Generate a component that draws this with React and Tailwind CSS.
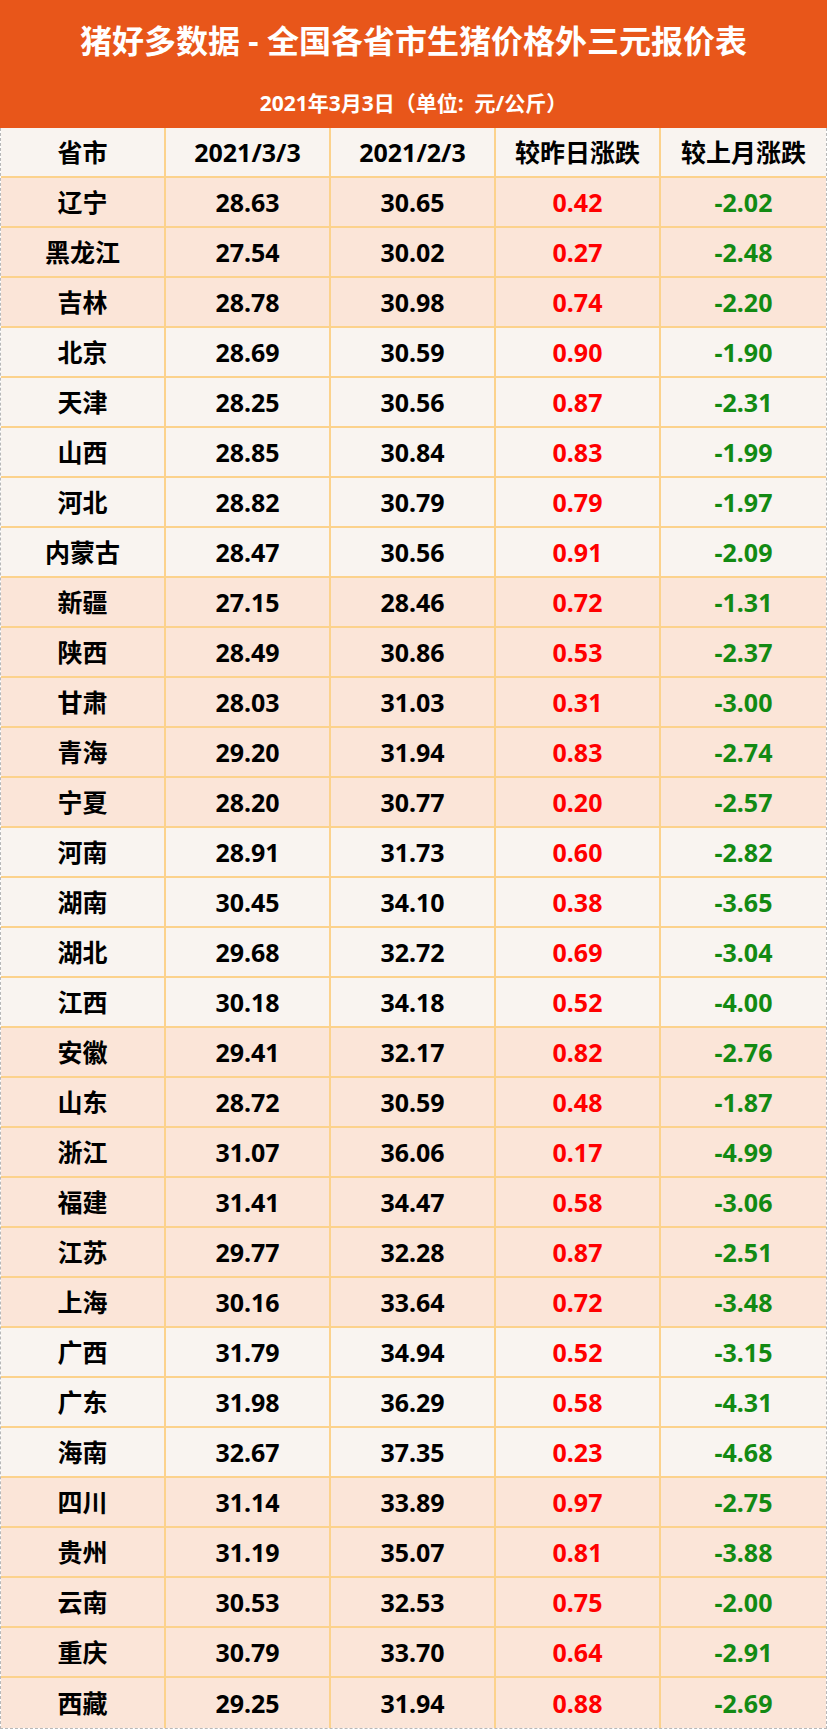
const rows = [
  ['辽宁', '28.63', '30.65', '0.42', '-2.02', 'a'],
  ['黑龙江', '27.54', '30.02', '0.27', '-2.48', 'a'],
  ['吉林', '28.78', '30.98', '0.74', '-2.20', 'a'],
  ['北京', '28.69', '30.59', '0.90', '-1.90', 'b'],
  ['天津', '28.25', '30.56', '0.87', '-2.31', 'b'],
  ['山西', '28.85', '30.84', '0.83', '-1.99', 'b'],
  ['河北', '28.82', '30.79', '0.79', '-1.97', 'b'],
  ['内蒙古', '28.47', '30.56', '0.91', '-2.09', 'b'],
  ['新疆', '27.15', '28.46', '0.72', '-1.31', 'a'],
  ['陕西', '28.49', '30.86', '0.53', '-2.37', 'a'],
  ['甘肃', '28.03', '31.03', '0.31', '-3.00', 'a'],
  ['青海', '29.20', '31.94', '0.83', '-2.74', 'a'],
  ['宁夏', '28.20', '30.77', '0.20', '-2.57', 'a'],
  ['河南', '28.91', '31.73', '0.60', '-2.82', 'b'],
  ['湖南', '30.45', '34.10', '0.38', '-3.65', 'b'],
  ['湖北', '29.68', '32.72', '0.69', '-3.04', 'b'],
  ['江西', '30.18', '34.18', '0.52', '-4.00', 'b'],
  ['安徽', '29.41', '32.17', '0.82', '-2.76', 'a'],
  ['山东', '28.72', '30.59', '0.48', '-1.87', 'a'],
  ['浙江', '31.07', '36.06', '0.17', '-4.99', 'a'],
  ['福建', '31.41', '34.47', '0.58', '-3.06', 'a'],
  ['江苏', '29.77', '32.28', '0.87', '-2.51', 'a'],
  ['上海', '30.16', '33.64', '0.72', '-3.48', 'a'],
  ['广西', '31.79', '34.94', '0.52', '-3.15', 'b'],
  ['广东', '31.98', '36.29', '0.58', '-4.31', 'b'],
  ['海南', '32.67', '37.35', '0.23', '-4.68', 'b'],
  ['四川', '31.14', '33.89', '0.97', '-2.75', 'a'],
  ['贵州', '31.19', '35.07', '0.81', '-3.88', 'a'],
  ['云南', '30.53', '32.53', '0.75', '-2.00', 'a'],
  ['重庆', '30.79', '33.70', '0.64', '-2.91', 'a'],
  ['西藏', '29.25', '31.94', '0.88', '-2.69', 'a'],
]

const font = { fontFamily: '"Noto Sans", "Noto Sans CJK SC", sans-serif' }

function Cell({ children, last, color }) {
  return (
    <div className={`flex items-center justify-center text-[25px] font-bold leading-none ${color || 'text-black'} ${last ? '' : 'border-r-2 border-[#fcd28c]'}`}>
      {children}
    </div>
  )
}

export default function App() {
  return (
    <div className="w-[827px] bg-white" style={font}>
      <div className="h-[128px] bg-[#e8561a] flex flex-col items-center text-white font-bold">
        <div className="mt-[19px] text-[32px] leading-[44px]">猪好多数据 - 全国各省市生猪价格外三元报价表</div>
        <div className="mt-[25px] text-[21px] leading-[30px]">2021年3月3日（单位:&nbsp;&nbsp;元/公斤）</div>
      </div>
      <div className="border-x border-b border-dashed border-[#b8b8b8]">
        <div className="grid grid-cols-5 h-[50px] bg-[#f9f4f0] border-b-2 border-[#fcd28c]">
          <Cell>省市</Cell>
          <Cell>2021/3/3</Cell>
          <Cell>2021/2/3</Cell>
          <Cell>较昨日涨跌</Cell>
          <Cell last>较上月涨跌</Cell>
        </div>
        {rows.map((r, i) => (
          <div
            key={r[0]}
            className={`grid grid-cols-5 h-[50px] ${r[5] === 'a' ? 'bg-[#fbe5d8]' : 'bg-[#f9f4f0]'} ${i === rows.length - 1 ? '' : 'border-b-2 border-[#fcd28c]'}`}
          >
            <Cell>{r[0]}</Cell>
            <Cell>{r[1]}</Cell>
            <Cell>{r[2]}</Cell>
            <Cell color="text-[#ff0000]">{r[3]}</Cell>
            <Cell last color="text-[#138a13]">{r[4]}</Cell>
          </div>
        ))}
      </div>
    </div>
  )
}
